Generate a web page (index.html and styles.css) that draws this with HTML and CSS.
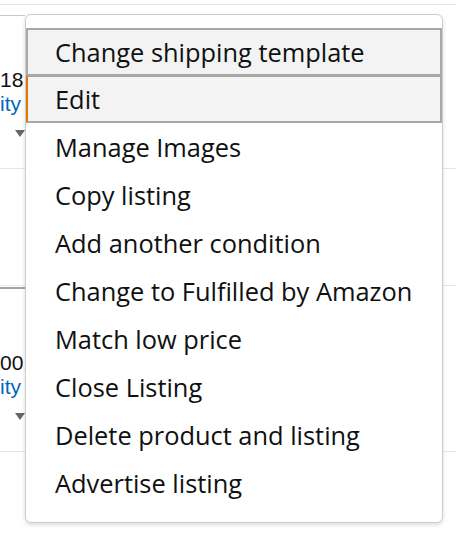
FILE: index.html
```
<!DOCTYPE html>
<html lang="en">
<head>
<meta charset="utf-8">
<title>Listing actions</title>
<link rel="stylesheet" href="styles.css">
</head>
<body>
<div class="page">
  <div class="hr"></div>
  <div class="row row-a">
    <div class="cell cell-a">
      <div class="num">18</div>
      <div class="link">ity</div>
      <div class="caret"></div>
    </div>
  </div>
  <div class="row row-b"></div>
  <div class="row row-c">
    <div class="cell cell-c">
      <div class="num">00.00</div>
      <div class="link">ity</div>
      <div class="caret"></div>
    </div>
  </div>

  <ul class="menu">
    <li class="item active">Change shipping template</li>
    <li class="item active focus">Edit</li>
    <li class="item">Manage Images</li>
    <li class="item">Copy listing</li>
    <li class="item">Add another condition</li>
    <li class="item">Change to Fulfilled by Amazon</li>
    <li class="item">Match low price</li>
    <li class="item">Close Listing</li>
    <li class="item">Delete product and listing</li>
    <li class="item">Advertise listing</li>
  </ul>
</div>
</body>
</html>
```
FILE: styles.css
```
html, body {
  margin: 0;
  padding: 0;
  background: #fff;
}
.page {
  position: relative;
  width: 456px;
  height: 536px;
  overflow: hidden;
  font-family: "Liberation Sans", Arial, sans-serif;
}
.hr {
  height: 0;
  margin-top: 4px;
  border-top: 1px solid #e7e7e7;
}
.row {
  box-sizing: border-box;
  border-bottom: 1px solid #e7e7e7;
}
.row-a { height: 154px; }
.row-b { height: 117px; }
.row-c { height: 165px; }
.cell {
  width: 25px;
  white-space: nowrap;
  font-size: 21px;
  line-height: 24px;
  color: #111;
}
.cell-a {
  margin-top: 10px;
  border-top: 1px solid #c8c8c8;
  padding-top: 52px;
}
.cell-c {
  margin-top: 1px;
  border-top: 2px solid #a2a2a2;
  padding-top: 62px;
}
.link {
  color: #0066c0;
}
.caret {
  width: 0;
  height: 0;
  margin: 14px 0 0 15px;
  border-left: 5px solid transparent;
  border-right: 5px solid transparent;
  border-top: 7px solid #666;
}
.menu {
  position: absolute;
  left: 25px;
  top: 14px;
  width: 418px;
  box-sizing: border-box;
  margin: 0;
  padding: 13px 0 15px;
  list-style: none;
  background: #fff;
  border: 1px solid #cdcdcd;
  border-radius: 6px;
  box-shadow: 0 2px 4px rgba(0, 0, 0, 0.14);
}
.item {
  box-sizing: border-box;
  height: 48px;
  padding-left: 27px;
  border: 2px solid transparent;
  font-family: "Open Sans", sans-serif;
  font-size: 25.4px;
  line-height: 44px;
  color: #0f1111;
  white-space: nowrap;
}
.item.active {
  background: #f3f3f3;
  border-color: #a8a8a8;
}
.item.active + .item.active {
  margin-top: -1px;
}
.item.focus {
  border-left-color: #e77600;
}
```
